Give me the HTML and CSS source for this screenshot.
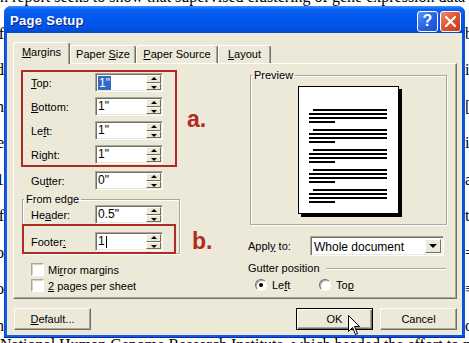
FILE: index.html
```html
<!DOCTYPE html>
<html lang="en">
<head>
  <meta charset="UTF-8" />
  <meta name="viewport" content="width=device-width, initial-scale=1.0"/>
  <title>Page Setup</title>
  <link rel="stylesheet" href="styles.css">
</head>
<body>
  <!-- document page behind the dialog: only the edges show -->
  <div class="doc">
    <p>h report seeks to show that supervised clustering of gene expression data</p>
    <p class="edge"><span class="l">diff</span><span class="r">be</span></p>
    <p class="edge"><span class="l">and</span><span class="r">in</span></p>
    <p class="edge"><span class="l">in</span><span class="r">[1]</span></p>
    <p class="edge"><span class="l">the</span><span class="r">it</span></p>
    <p class="edge"><span class="l">1</span><span class="r">a</span></p>
    <p class="edge"><span class="l">of</span><span class="r">to</span></p>
    <p class="edge"><span class="l">so</span><span class="r">=</span></p>
    <p class="edge"><span class="l">to</span><span class="r">≡</span></p>
    <p class="edge"><span class="l">on</span><span class="r">of</span></p>
    <p class="last">National Human Genome Research Institute, which headed the effort to map it</p>
  </div>

  <div class="window">
    <div class="titlebar">
      <span class="title">Page Setup</span>
      <div class="title-buttons">
        <span class="tb-btn help">?</span>
        <span class="tb-btn close">
          <svg width="13" height="13" viewBox="0 0 13 13">
            <path d="M2 2 L11 11 M11 2 L2 11" stroke="#fff" stroke-width="2.2" stroke-linecap="round"/>
          </svg>
        </span>
      </div>
    </div>

    <div class="dialog">
      <div class="tabs">
        <div class="tab active" style="width:57px"><u>M</u>argins</div>
        <div class="tab" style="width:66px">Paper <u>S</u>ize</div>
        <div class="tab" style="width:82px"><u>P</u>aper Source</div>
        <div class="tab" style="width:53px"><u>L</u>ayout</div>
      </div>

      <div class="panel">
        <div class="col-left">
          <div class="annotated">
            <div class="marked margins-box">
              <div class="row">
                <label><u>T</u>op:</label>
                <div class="field"><span class="value"><span class="selected">1"</span></span><span class="spin"><i class="up"></i><i class="down"></i></span></div>
              </div>
              <div class="row">
                <label><u>B</u>ottom:</label>
                <div class="field"><span class="value">1"</span><span class="spin"><i class="up"></i><i class="down"></i></span></div>
              </div>
              <div class="row">
                <label>Le<u>f</u>t:</label>
                <div class="field"><span class="value">1"</span><span class="spin"><i class="up"></i><i class="down"></i></span></div>
              </div>
              <div class="row">
                <label>Ri<u>g</u>ht:</label>
                <div class="field"><span class="value">1"</span><span class="spin"><i class="up"></i><i class="down"></i></span></div>
              </div>
            </div>
            <span class="note">a.</span>
          </div>

          <div class="row gutter-row">
            <label>Gu<u>t</u>ter:</label>
            <div class="field"><span class="value">0"</span><span class="spin"><i class="up"></i><i class="down"></i></span></div>
          </div>

          <div class="annotated edge-wrap">
            <fieldset class="group edge-group">
              <legend>From edge</legend>
              <div class="row header-row">
                <label>He<u>a</u>der:</label>
                <div class="field"><span class="value">0.5"</span><span class="spin"><i class="up"></i><i class="down"></i></span></div>
              </div>
              <div class="marked footer-box">
                <div class="row">
                  <label>Footer<u>:</u></label>
                  <div class="field"><span class="value">1<span class="caret"></span></span><span class="spin"><i class="up"></i><i class="down"></i></span></div>
                </div>
              </div>
            </fieldset>
            <span class="note">b.</span>
          </div>

          <div class="checks">
            <div class="check"><span class="box"></span><span>Mi<u>r</u>ror margins</span></div>
            <div class="check"><span class="box"></span><span><u>2</u> pages per sheet</span></div>
          </div>
        </div>

        <div class="col-right">
          <fieldset class="group preview-group">
            <legend>Preview</legend>
            <div class="page">
              <div class="para"><i class="first"></i><i></i><i></i><i class="last"></i></div>
              <div class="para"><i class="first"></i><i></i><i></i><i class="last"></i></div>
              <div class="para"><i class="first"></i><i></i><i></i><i class="last"></i></div>
              <div class="para"><i class="first"></i><i></i><i></i><i class="last"></i></div>
              <div class="para"><i class="first"></i><i></i><i></i><i class="last"></i></div>
            </div>
          </fieldset>

          <div class="apply-row">
            <label>Appl<u>y</u> to:</label>
            <div class="select">
              <span class="value">Whole document</span>
              <span class="drop"><i></i></span>
            </div>
          </div>

          <div class="section-title">
            <span>Gutter position</span>
            <span class="rule"></span>
          </div>

          <div class="radios">
            <div class="radio-item"><span class="radio checked"></span><span>Le<u>f</u>t</span></div>
            <div class="radio-item"><span class="radio"></span><span>To<u>p</u></span></div>
          </div>
        </div>
      </div>

      <div class="buttons">
        <button class="btn"><u>D</u>efault...</button>
        <button class="btn default">OK
          <svg class="cursor" width="13" height="21" viewBox="0 0 13 21">
            <path d="M0.5 0.5 L0.5 16.5 L4.5 12.5 L7.5 19.5 L9.5 18.5 L6.5 11.5 L11.5 11.5 Z" fill="#fff" stroke="#000" stroke-width="1"/>
          </svg>
        </button>
        <button class="btn">Cancel</button>
      </div>
    </div>
  </div>
</body>
</html>
```

FILE: styles.css
```css
:root {
  --face: #ece9d8;
  --shadow: #aca899;
  --dark: #716f64;
  --mark: #b02b24;
}

body {
  margin: 0;
  width: 469px;
  height: 343px;
  overflow: hidden;
  position: relative;
  background: #fff;
  font-family: "Liberation Sans", Arial, sans-serif;
  font-size: 11px;
  color: #000;
}

/* document behind the dialog */
.doc {
  margin-top: -21px;
  font-family: "Liberation Serif", "Times New Roman", serif;
  font-size: 16px;
}

.doc p {
  margin: 0;
  line-height: 36.5px;
  white-space: nowrap;
}

.doc .edge {
  display: flex;
  justify-content: space-between;
}

.doc .l {
  width: 4px;
  overflow: hidden;
  display: flex;
  justify-content: flex-end;
}

.doc .r {
  width: 4px;
  overflow: hidden;
}

.doc .last {
  margin-top: -17.5px;
}

/* window frame */
.window {
  position: absolute;
  left: 4px;
  top: 6px;
  width: 461px;
  height: 332px;
  box-sizing: border-box;
  padding: 0 3px 3px;
  display: flex;
  flex-direction: column;
  background: linear-gradient(to right, #0a3fc8, #1560ea 2px, #0b50e0);
  border-radius: 7px 7px 0 0;
  box-shadow: inset 0 -1px 0 #0a2a9c;
}

.titlebar {
  height: 27px;
  margin: 0 -3px;
  padding: 0 4px 0 6px;
  display: flex;
  align-items: center;
  justify-content: space-between;
  border-radius: 7px 7px 0 0;
  background: linear-gradient(to bottom, #3e8ffb 0%, #0b62f1 12%, #0058ee 45%, #0254e6 80%, #0247cc 100%);
}

.title {
  color: #fff;
  font-weight: bold;
  font-size: 13px;
  letter-spacing: 0.3px;
  text-shadow: 1px 1px 0 #0b2080;
  margin-top: 1px;
}

.title-buttons {
  display: flex;
  gap: 2px;
  margin-top: 3px;
}

.tb-btn {
  width: 21px;
  height: 21px;
  box-sizing: border-box;
  border: 1px solid #fff;
  border-radius: 3px;
  display: flex;
  align-items: center;
  justify-content: center;
  color: #fff;
}

.help {
  background: linear-gradient(135deg, #5b95f9, #2462e4 55%, #1a4fd0);
  font-weight: bold;
  font-size: 16px;
}

.close {
  background: linear-gradient(135deg, #ef8a6a, #e0522e 50%, #c63d1a);
}

/* dialog body */
.dialog {
  flex: 1;
  background: var(--face);
  padding: 9px 5px 5px 6px;
  display: flex;
  flex-direction: column;
}

.tabs {
  display: flex;
  align-items: flex-end;
  height: 21px;
  position: relative;
  z-index: 1;
}

.tab {
  box-sizing: border-box;
  height: 18px;
  line-height: 17px;
  text-align: center;
  border: 1px solid;
  border-color: #fff var(--dark) transparent #fff;
  border-bottom: none;
  border-radius: 3px 3px 0 0;
  box-shadow: inset -1px 0 0 var(--shadow);
  background: var(--face);
}

.tab.active {
  height: 22px;
  line-height: 19px;
  margin-bottom: -1px;
}

.panel {
  height: 236px;
  box-sizing: border-box;
  border: 1px solid;
  border-color: #fff var(--dark) var(--dark) #fff;
  box-shadow: inset -1px -1px 0 var(--shadow);
  padding: 6px 0 0 7px;
  display: grid;
  grid-template-columns: 223px 198px;
  column-gap: 4px;
  align-items: start;
}

/* left column */
.annotated {
  display: flex;
  align-items: center;
}

.marked {
  box-sizing: border-box;
  border: 2px solid var(--mark);
}

.margins-box {
  width: 156px;
  padding: 1px 0 1px 8px;
  display: flex;
  flex-direction: column;
  gap: 5px;
}

.note {
  color: var(--mark);
  font-weight: bold;
  font-size: 23px;
  line-height: 26px;
  margin-left: 10px;
}

.row {
  display: flex;
  align-items: center;
  height: 19px;
}

.row label {
  width: 64px;
}

.field {
  width: 68px;
  height: 19px;
  box-sizing: border-box;
  background: #fff;
  border: 1px solid;
  border-color: var(--shadow) #fff #fff var(--shadow);
  box-shadow: inset 1px 1px 0 var(--dark), inset -1px -1px 0 var(--face);
  display: flex;
  padding: 1px;
}

.field .value {
  flex: 1;
  font-size: 12px;
  line-height: 15px;
  padding-left: 1px;
  display: flex;
  align-items: center;
}

.selected {
  background: #316ac5;
  color: #fff;
  padding: 0 1px;
  line-height: 14px;
}

.caret {
  display: inline-block;
  width: 1px;
  height: 12px;
  background: #000;
  margin-left: 1px;
}

.spin {
  width: 15px;
  display: flex;
  flex-direction: column;
}

.spin i {
  flex: 1;
  box-sizing: border-box;
  background: var(--face);
  border: 1px solid;
  border-color: #fff var(--dark) var(--dark) #fff;
  position: relative;
}

.spin i::after {
  content: "";
  position: absolute;
  left: 4px;
  top: 1px;
  border-left: 3px solid transparent;
  border-right: 3px solid transparent;
}

.spin .up::after {
  border-bottom: 3px solid #000;
}

.spin .down::after {
  border-top: 3px solid #000;
  top: 2px;
}

.gutter-row {
  margin-top: 4px;
  padding-left: 10px;
}

.group {
  margin: 0;
  padding: 0;
  min-width: 0;
  border: 1px solid var(--shadow);
  box-shadow: 1px 1px 0 #fff, inset 1px 1px 0 #fff;
}

.group legend {
  padding: 0 2px;
  margin-left: 1px;
  line-height: 12px;
}

.edge-wrap {
  align-items: flex-end;
  margin-top: 3px;
}

.edge-group {
  width: 156px;
  margin-left: 1px;
}

.edge-wrap .note {
  margin-left: 12px;
}

.header-row {
  padding-left: 8px;
}

.footer-box {
  width: 154px;
  margin: 0 0 -1px -1px;
  padding: 6px 0 1px 7px;
  position: relative;
}

.checks {
  margin-top: 9px;
  padding-left: 10px;
  display: flex;
  flex-direction: column;
  gap: 3px;
}

.check {
  display: flex;
  align-items: center;
  height: 13px;
}

.check .box {
  width: 13px;
  height: 13px;
  box-sizing: border-box;
  background: #fff;
  border: 1px solid;
  border-color: var(--shadow) #fff #fff var(--shadow);
  box-shadow: inset 1px 1px 0 #d4d0c8;
  margin-right: 4px;
}

/* right column */
.preview-group {
  width: 195px;
  margin: -1px 0 0 2px;
  padding-bottom: 10px;
}

.page {
  width: 101px;
  height: 128px;
  box-sizing: border-box;
  margin: 5px auto 0;
  background: #fff;
  border: 1px solid #000;
  box-shadow: 3px 3px 0 #000;
  padding: 22px 11px 0 10px;
  display: flex;
  flex-direction: column;
  gap: 6px;
}

.para {
  display: flex;
  flex-direction: column;
  gap: 2px;
}

.para i {
  display: block;
  height: 2px;
  background: #000;
}

.para .first {
  margin-left: 4px;
}

.para .last {
  width: 26px;
}

.apply-row {
  display: flex;
  align-items: center;
  margin-top: 11px;
}

.apply-row label {
  width: 62px;
}

.select {
  width: 134px;
  height: 20px;
  box-sizing: border-box;
  background: #fff;
  border: 1px solid;
  border-color: var(--shadow) #fff #fff var(--shadow);
  box-shadow: inset 1px 1px 0 var(--dark), inset -1px -1px 0 var(--face);
  display: flex;
  padding: 2px;
}

.select .value {
  flex: 1;
  font-size: 12px;
  line-height: 16px;
  padding-left: 1px;
}

.drop {
  width: 16px;
  box-sizing: border-box;
  background: var(--face);
  border: 1px solid;
  border-color: #fff var(--dark) var(--dark) #fff;
  display: flex;
  align-items: center;
  justify-content: center;
}

.drop i {
  border-left: 4px solid transparent;
  border-right: 4px solid transparent;
  border-top: 4px solid #000;
}

.section-title {
  display: flex;
  align-items: center;
  margin-top: 6px;
  line-height: 13px;
}

.rule {
  flex: 1;
  height: 1px;
  background: var(--shadow);
  border-bottom: 1px solid #fff;
  margin-left: 6px;
}

.radios {
  display: flex;
  margin-top: 3px;
  padding-left: 7px;
}

.radio-item {
  display: flex;
  align-items: center;
  width: 64px;
  height: 13px;
}

.radio {
  width: 12px;
  height: 12px;
  box-sizing: border-box;
  border-radius: 50%;
  background: #fff;
  border: 1px solid;
  border-color: var(--dark) #fff #fff var(--dark);
  box-shadow: inset 1px 1px 0 var(--shadow);
  margin-right: 5px;
  position: relative;
}

.radio.checked::after {
  content: "";
  position: absolute;
  left: 3px;
  top: 3px;
  width: 4px;
  height: 4px;
  border-radius: 50%;
  background: #000;
}

/* bottom buttons */
.buttons {
  display: flex;
  margin-top: 9px;
  gap: 7px;
}

.btn {
  width: 77px;
  height: 22px;
  box-sizing: border-box;
  font-family: inherit;
  font-size: 11px;
  color: #000;
  background: var(--face);
  border: 1px solid;
  border-color: #fff var(--dark) var(--dark) #fff;
  box-shadow: inset -1px -1px 0 var(--shadow);
  padding: 0;
  position: relative;
}

.btn:first-child {
  margin-left: 1px;
  margin-right: auto;
}

.btn.default {
  border: 1px solid #000;
  box-shadow: inset 1px 1px 0 #fff, inset -1px -1px 0 var(--dark), inset -2px -2px 0 var(--shadow);
}

.cursor {
  position: absolute;
  left: 51px;
  top: 6px;
}
```
